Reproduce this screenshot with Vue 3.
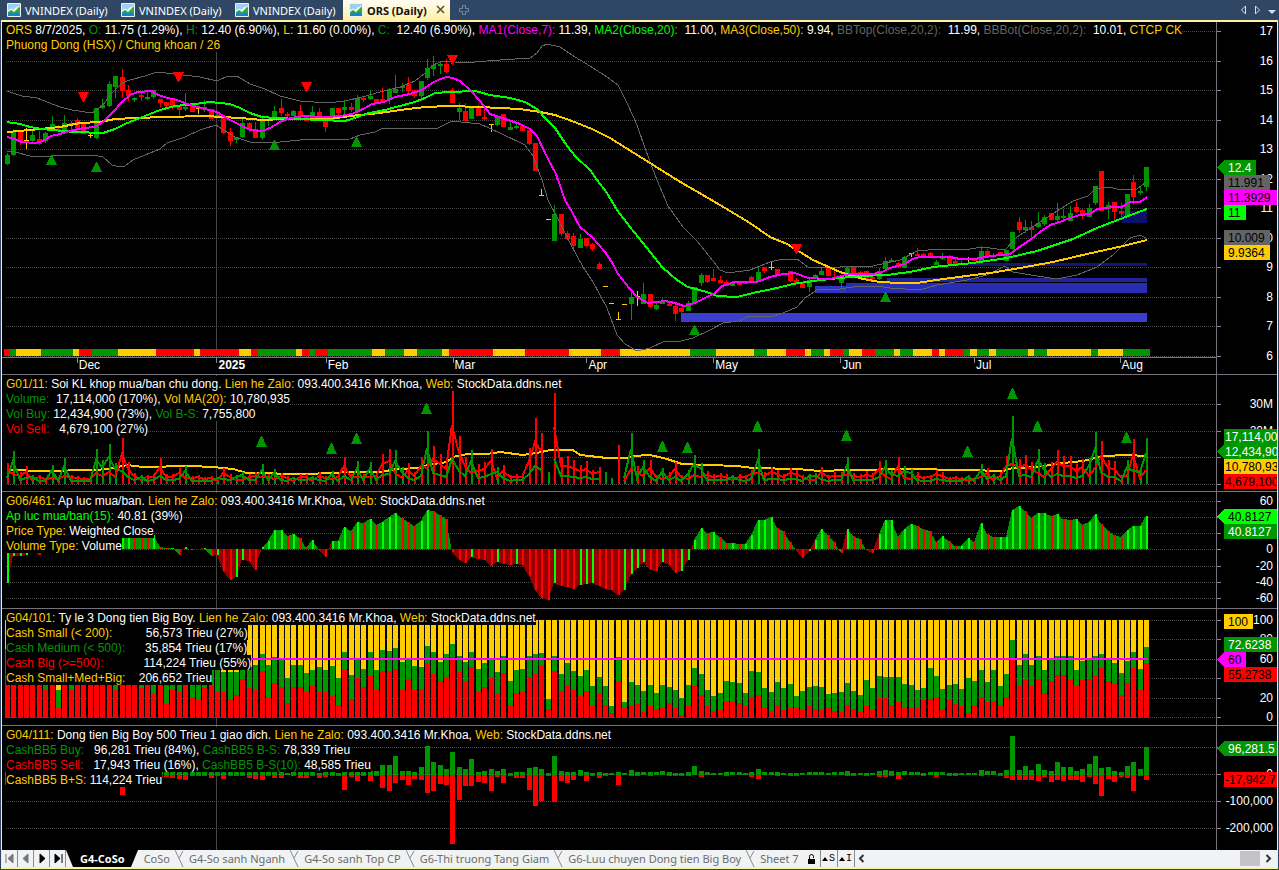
<script setup>
const BAR_STEP = 6.363;
const barX = (i) => Math.round(7 + i * BAR_STEP);

const colors = {
  g: '#009600',
  r: '#ff0000',
  y: '#ffcc00',
  m: '#ff00ff',
  l: '#00ff00',
  d: '#646464',
  w: '#ffffff',
};

const parse = (text) => text.trim().split(/[,\n]+/).map((row) => row.trim().split(/\s+/));

// color, high, body top, body bottom, low
const candles = parse(`
g 153 155 164 165,g 130 131 155 156,r 131 132 141 145,y 128 140 141 149,g 130 135 141 143,r 131 139 144 145
g 132 133 141 143,g 116 124 128 131,r 125 129 131 131,g 115 123 131 133,g 121 123 124 130,r 118 120 128 130
r 124 124 134 134,y 132 135 136 138,g 108 108 138 139,g 99 105 108 109,g 81 84 106 107,g 76 76 87 98
r 69 77 91 98,r 85 90 96 101,g 97 98 100 102,r 93 95 97 101,g 90 97 99 100,g 90 90 97 99
r 99 99 103 107,r 102 102 106 107,r 99 99 108 109,r 105 105 110 118,g 93 107 109 111,r 105 105 112 112
y 106 108 109 114,g 100 107 108 112,r 109 109 119 119,g 113 115 118 118,r 117 117 133 134,r 128 132 141 146
g 137 137 140 143,g 119 123 137 138,r 122 123 130 132,r 122 129 138 138,g 118 120 138 140,g 118 119 121 126
g 106 111 118 119,r 99 108 113 116,r 112 114 116 117,g 110 111 116 116,r 105 111 116 117,r 115 115 121 121
g 106 112 119 120,r 108 112 121 121,r 119 120 127 132,g 108 108 120 121,r 108 108 113 115,g 100 107 110 114
r 103 107 110 112,g 95 98 112 113,r 97 98 100 102,g 90 96 99 100,r 99 99 103 104,r 88 99 102 103
g 88 89 100 104,g 75 89 93 93,g 83 86 88 92,r 77 84 91 95,r 90 90 96 98,g 81 81 96 101
g 59 68 78 80,g 56 65 69 76,g 63 64 66 74,r 59 64 72 73,r 88 90 103 103,g 103 108 112 120
r 103 111 121 121,g 107 108 119 119,r 105 107 116 116,r 109 117 119 120,y 124 124 125 132,g 116 117 125 126
r 114 114 127 127,g 122 127 130 130,g 122 126 128 129,r 124 126 131 131,r 128 130 144 145,r 143 143 171 171
y 189 195 196 196,y 219 219 220 220,g 205 214 241 241,r 214 214 234 236,r 231 233 239 240,r 233 236 246 251
g 234 239 248 248,r 238 238 246 247,r 243 244 249 251,r 262 264 269 269,y 286 286 287 287,y 303 303 304 304
y 312 319 320 320,y 304 304 305 305,g 290 297 304 320,y 291 296 297 306,g 283 294 304 304,r 294 294 307 308
g 303 305 309 310,g 298 301 304 304,r 301 304 306 306,r 302 306 314 321,r 308 308 312 313,g 301 303 311 311
g 287 287 303 303,g 273 275 283 286,r 275 275 282 283,r 269 278 281 281,r 276 280 283 283,r 280 282 286 286
g 281 283 286 286,r 282 282 285 285,r 282 282 284 284,r 276 277 282 282,g 268 272 282 282,r 267 267 271 273
y 261 267 268 270,r 269 269 276 276,r 273 273 275 275,r 271 271 281 282,r 278 280 284 284,r 282 283 288 288
g 279 280 287 292,g 274 275 278 278,g 268 271 275 275,r 268 268 276 276,r 268 277 279 279,g 276 278 283 289
g 266 268 275 275,r 266 266 273 273,r 271 272 274 275,r 271 271 280 280,r 275 277 279 280,g 268 271 279 280
g 257 261 269 269,g 258 260 262 262,r 262 263 267 267,g 256 257 268 268,y 253 253 254 257,r 248 254 256 256
r 253 254 256 256,r 252 253 257 257,g 260 262 265 265,g 253 257 259 260,r 255 257 264 264,r 259 261 264 264
r 260 263 265 265,y 257 259 260 262,r 258 258 261 261,g 246 251 262 262,r 249 251 256 256,g 253 255 256 256
r 252 252 255 256,g 250 250 261 261,g 232 232 249 249,r 217 222 230 233,g 220 227 230 233,r 221 227 230 238
g 212 223 227 228,g 215 217 224 226,r 213 213 220 220,g 203 216 220 222,g 209 216 218 220,g 206 213 221 221
r 202 207 212 213,r 209 210 215 219,g 204 208 217 217,g 186 186 203 205,r 171 171 211 211,g 202 205 209 219
r 202 202 212 222,r 203 211 214 220,g 194 194 217 217,r 175 182 197 205,g 186 191 193 195,g 167 167 187 191
`).map(([color, ...rest], i) => {
  const [high, top, bottom, low] = rest.map(Number);
  return { x: barX(i), fill: colors[color], high, top, bottom, low };
});

const overlays = [
  {
    color: '#646464',
    width: 1,
    points: '7,91 22,96 37,98 60,107 72,110 92,113 102,106 112,93 122,83 130,80 145,76 157,72 175,74 200,77 217,81 228,76 237,76 250,84 265,89 280,96 300,101 328,103 345,101 362,97 380,92 400,87 415,81 425,73 433,65 443,61 455,62 475,62 500,60 530,58 537,53 542,46 547,44 560,47 575,57 590,66 607,77 618,85 628,105 637,125 645,148 652,167 657,180 668,206 683,227 697,241 713,261 720,270 728,273 750,270 770,262 783,259 797,259 808,267 820,268 840,267 873,266 900,260 917,251 940,249 970,249 982,247 1005,250 1017,237 1037,224 1057,211 1073,201 1088,196 1095,189 1108,187 1122,190 1137,189 1146,182',
  },
  {
    color: '#646464',
    width: 1,
    points: '7,151 15,152 30,156 42,157 60,155 93,155 103,157 112,165 120,167 125,166 133,160 150,153 160,149 167,143 185,137 200,130 216,125 225,131 235,137 250,142 270,143 300,140 350,139 360,135 375,132 383,128 410,128 438,128 452,121 480,124 500,133 525,145 533,156 542,180 548,200 560,223 570,243 583,267 593,282 607,308 617,335 625,344 637,351 650,348 665,341 677,342 693,338 710,330 723,323 740,321 748,316 770,317 783,313 797,307 805,298 817,290 840,289 853,287 877,286 890,288 920,290 937,285 967,280 987,275 1005,266 1013,272 1037,276 1057,279 1077,275 1097,267 1113,255 1130,238 1140,235 1146,238',
  },
  {
    color: '#ffcc00',
    width: 2,
    points: '7,132 30,130 60,127 80,123 100,122 115,119 135,118 165,117 205,116 240,118 262,120 285,119 330,119 350,116 380,113 400,110 425,107 450,106 480,107 520,109 540,112 555,115 572,121 592,129 610,138 650,163 677,180 720,205 750,223 770,237 787,244 813,260 840,272 863,279 880,282 900,283 917,283 943,279 990,273 1020,268 1053,262 1087,254 1123,246 1147,240',
  },
  {
    color: '#00ff00',
    width: 2,
    points: '7,122 20,124 30,127 42,129 52,130 75,132 103,133 115,129 125,124 135,120 150,114 160,110 175,106 195,104 210,102 230,104 240,108 250,113 262,117 275,118 300,119 320,120 345,121 355,118 365,114 385,110 400,106 415,102 427,97 435,93 450,92 475,91 490,95 510,98 525,102 537,109 545,118 555,128 565,143 575,156 590,170 597,180 607,193 617,210 630,227 647,248 662,267 677,280 688,287 707,292 717,296 737,297 753,293 777,288 793,284 813,281 840,278 860,276 887,275 910,272 933,267 973,263 1007,258 1037,251 1073,239 1097,228 1123,218 1147,209',
  },
  {
    color: '#ff00ff',
    width: 2,
    points: '7,137 14,139 22,142 35,143 43,141 51,136 60,134 70,131 83,128 95,127 103,122 112,113 122,102 130,95 138,92 152,91 158,95 168,98 177,100 190,105 205,109 217,112 230,120 240,125 250,130 262,131 270,128 280,122 290,118 305,116 325,117 340,116 352,114 365,108 372,104 384,102 395,97 410,94 422,90 432,83 440,79 447,77 453,78 460,81 470,90 480,101 490,114 505,119 520,124 530,129 537,136 548,159 556,174 565,200 572,212 580,227 592,237 605,252 613,264 618,274 630,289 637,297 648,303 665,301 675,303 684,306 695,303 705,298 715,293 722,286 735,282 757,282 770,277 783,274 795,273 808,278 830,279 842,276 850,274 870,274 880,273 890,268 905,264 912,259 920,257 950,257 960,259 975,259 985,257 1000,255 1010,254 1018,248 1030,240 1040,232 1050,225 1060,222 1070,218 1080,215 1090,214 1097,209 1115,207 1122,207 1130,202 1140,202 1147,197',
  },
];

const bands = [
  { x: 681, y: 313, width: 466, height: 9, fill: '#3c3fce' },
  { x: 815, y: 286, width: 31, height: 7, fill: '#3034c0' },
  { x: 846, y: 283, width: 301, height: 10, fill: '#2a2db4' },
  { x: 887, y: 278, width: 260, height: 4, fill: '#22259a' },
  { x: 968, y: 263, width: 179, height: 3, fill: '#14167a' },
  { x: 1122, y: 211, width: 25, height: 12, fill: '#0c1068' },
];

const sells = [[83, 92], [178, 72], [306, 82], [452, 55], [796, 244]];
const buys = [[51, 155], [96, 162], [274, 140], [356, 137], [694, 325], [885, 292]];
const volumeBuys = [
  [261, 436], [331, 443], [356, 433], [426, 403], [662, 441], [687, 442],
  [757, 421], [846, 430], [967, 446], [1012, 388], [1037, 421], [1126, 432],
];

// trend ribbon: color and right edge of each run
const ribbon = parse(`
r 10,g 16,y 41,g 73,y 79,r 92,g 118,y 156,r 194,y 200,r 239,y 251,r 258,g 296,y 302,r 309,g 315,r 328
g 372,y 385,g 404,y 417,g 442,y 449,r 493,y 525,r 569,y 601,r 620,y 690,g 716,y 754,g 767,y 786,r 805
y 811,g 824,y 830,r 843,g 849,y 862,r 875,g 894,y 900,g 913,y 932,r 939,y 945,r 964,g 970,y 977,g 989
y 996,g 1028,y 1034,g 1047,y 1091,g 1098,y 1123,g 1150
`).map(([color, end], i, all) => {
  const x = i ? Number(all[i - 1][1]) : 4;
  return { x, width: Number(end) - x, fill: colors[color] };
});

const volume = parse(`
r 21,g 33,r 12,r 18,g 9,r 9,r 6,g 19,r 6,g 26,r 9,r 8,r 7,r 7,g 35,g 24,g 40,g 21,r 46,r 22
r 11,g 9,r 9,r 10,r 26,r 10,r 10,r 16,g 18,r 8,r 9,r 7,r 8,g 7,r 16,r 10,g 9,g 12,r 10,r 12
g 20,r 10,g 15,r 11,r 8,g 7,r 10,r 10,g 8,r 12,r 8,g 13,r 9,r 27,r 10,g 23,r 10,g 22,r 11,r 30
r 35,g 34,g 17,r 21,r 12,r 27,g 53,r 38,r 30,r 23,r 93,r 48,r 27,g 34,r 20,r 22,r 35,g 17,r 19,r 9
r 10,r 10,r 36,r 66,r 51,g 12,r 91,r 27,r 28,r 24,r 19,r 23,r 14,r 17,g 12,g 6,r 39,g 7,g 51,r 18
g 24,r 24,r 9,g 16,r 12,r 22,r 9,g 14,g 29,g 21,r 13,r 10,r 11,r 10,g 9,r 10,r 9,r 14,g 35,r 12
r 17,r 14,r 10,r 16,r 14,r 9,g 10,g 11,r 17,r 9,r 12,r 12,g 27,r 11,r 10,r 13,r 11,r 23,g 24,g 14
r 27,g 18,g 15,r 12,r 8,r 9,r 14,r 12,r 7,r 8,r 7,g 9,r 7,g 20,r 16,g 10,r 12,r 28,g 68,r 25
r 29,r 22,g 35,g 21,r 22,r 34,r 28,r 28,r 20,r 25,g 26,g 52,r 43,r 24,r 23,r 9,g 24,r 45,g 17,g 46
`).map(([color, height], i) => {
  const h = Number(height);
  const up = color === 'g';
  return {
    x: barX(i),
    h,
    fill: colors[color],
    buy: Math.round(h * (up ? 0.66 : 0.26) + 1),
    sell: Math.round(h * (up ? 0.28 : 0.62) + 1),
  };
});
const volumeLine = (key, from, to) => volume
  .slice(from, to)
  .map((bar) => `${bar.x},${484 - bar[key]}`)
  .join(' ');
const volumeRuns = [[0, 85], [86, 94], [97, 180]];
const volumeAverage = '7,469 13,470 40,471 97,470 113,468 127,465 143,467 190,466 213,467 233,469 247,473 307,474 353,472 380,472 397,469 420,468 427,465 447,462 453,457 467,454 487,454 500,452 523,455 537,453 550,450 573,450 580,455 607,458 627,458 633,456 650,455 667,459 682,464 737,466 753,468 797,469 820,471 849,470 907,469 967,470 1003,471 1013,468 1037,467 1063,463 1083,461 1103,456 1127,455 1146,456';

const pressure = [
  -34, -7, -7, -6, -2, -6, -2, 1, 1, 1, 2, 2, 3, 4, 6, 8, 10, 12, 14, 16,
  15, 14, 13, 14, 2, 1, 1, -6, 2, -1, 0, 1, -7, -6, -22, -31, -28, -11, -12, -21,
  2, 8, 19, 19, 13, 15, 11, 1, 9, -1, -8, 8, 8, 22, 18, 27, 26, 30, 24, 27,
  32, 36, 31, 27, 23, 28, 39, 38, 34, 30, -3, -11, -14, -8, -10, -11, -17, -13, -15, -16,
  -15, -16, -27, -41, -49, -51, -34, -37, -38, -40, -36, -35, -34, -37, -40, -41, -46, -41, -25, -19,
  -13, -21, -22, -13, -16, -24, -22, -11, 9, 21, 16, 17, 12, 6, 6, 5, 5, 14, 29, 29,
  32, 21, 18, 7, -1, -9, -2, 9, 20, 14, 7, -4, 20, 13, 10, -1, -4, 15, 29, 29,
  12, 20, 25, 23, 20, 18, 7, 13, 8, 3, 3, 11, 7, 26, 15, 12, 12, 12, 39, 43,
  38, 31, 36, 36, 33, 35, 30, 29, 30, 24, 27, 35, 25, 18, 14, 12, 19, 23, 23, 33,
];
const pressureSticks = pressure.map((value, i) => ({
  x: barX(i),
  y: Math.min(549, 549 - value),
  height: Math.abs(value),
  fill: i === 0 || value >= pressure[i - 1] ? '#00ff00' : '#ff0000',
}));
const pressureAreas = pressure.slice(1).map((value, i) => ({
  points: `${barX(i)},549 ${barX(i)},${549 - pressure[i]} ${barX(i + 1)},${549 - value} ${barX(i + 1)},549`,
  fill: pressure[i] > 0 ? '#009600' : '#960000',
}));

// medium and big share levels, 390 is 100% and 683 is 0%
const shares = parse(`
475 548,500 560,500 560,500 560,500 570,510 570,520 598,500 575,598 652,500 575,510 598,500 570,500 570
500 570,500 570,500 570,500 570,510 600,500 570,500 570,500 570,520 592,500 575,530 612,520 575,540 640
510 598,520 606,500 575,530 624,530 630,510 592,520 587,540 606,546 606,546 630,546 615,516 567,530 594
525 600,492 543,525 622,501 579,510 591,564 639,525 591,525 591,549 606,538 588,531 606,538 606,528 616
564 645,484 540,555 627,510 562,535 591,486 556,540 598,480 543,483 543,474 537,516 598,510 567,528 600
531 597,468 519,484 552,514 573,492 564,460 501,498 546,514 573,484 531,537 606,519 591,510 564,546 612
498 549,573 645,540 609,537 606,498 561,492 550,489 528,627 657,498 543,552 603,519 585,543 600,558 618
540 603,588 648,561 609,588 645,648 669,501 576,636 654,575 645,585 642,603 666,583 648,609 657,583 652
591 639,598 654,624 675,585 648,534 587,552 615,598 648,618 663,609 660,573 633,576 636,579 639,609 648
543 621,546 615,594 652,606 663,576 645,594 660,582 652,618 652,603 660,591 648,588 657,591 660,612 652
609 663,606 666,579 645,603 657,615 666,570 648,594 660,558 624,561 624,561 645,561 636,582 652,585 652
600 654,594 630,534 627,558 624,597 657,585 630,582 642,597 648,564 669,573 645,540 621,576 636,540 633
588 645,552 621,450 507,525 587,492 570,525 587,498 567,540 609,510 573,498 555,498 555,498 570,540 587
513 570,510 567,498 558,492 534,507 573,519 582,549 615,513 579,486 534,537 600,471 519
`).map(([medium, big], i) => ({
  x: barX(i) - 2,
  medium: Math.round((683 - medium) / 3),
  big: Math.round((683 - big) / 3),
}));

// big money bought and sold per session
const flows = parse(`
2 10,2 2,2 2,2 2,2 2,2 2,2 2,2 2,2 2,2 2,2 2,2 2,2 2,2 2,2 2,2 2,2 2,2 2,2 20,2 2
2 2,2 2,2 2,2 2,2 2,2 2,2 3,3 4,3 5,2 1,2 1,2 1,2 3,2 1,3 4,2 1,3 1,3 1,2 3,2 4
2 5,3 1,3 3,3 3,1 0,2 1,3 3,2 3,3 1,1 3,2 2,3 1,1 1,3 15,2 2,3 6,3 1,3 6,3 1,9 13
9 16,18 8,3 5,3 10,2 4,7 5,28 18,12 16,9 9,5 10,22 69,7 25,5 11,15 11,2 7,3 8,5 16,3 2,5 8,1 1
2 3,2 3,6 15,7 31,5 26,1 1,18 27,3 6,2 8,2 5,4 1,2 6,1 1,2 3,1 1,1 0,2 10,1 0,4 1,2 1
2 0,2 1,2 0,3 0,2 1,1 1,1 1,2 1,8 0,3 2,2 0,1 0,1 0,2 1,2 0,2 0,1 0,2 2,5 4,2 0
2 0,2 1,1 0,1 1,1 1,1 0,2 0,2 0,2 0,1 0,2 0,2 0,3 1,1 1,1 0,1 1,1 0,3 2,4 2,3 1
2 4,3 0,2 0,2 0,1 1,2 0,2 2,2 0,1 1,1 1,1 0,1 0,1 0,4 1,3 0,3 0,1 1,4 3,38 5,4 5
8 5,4 5,10 6,4 2,3 7,12 5,7 6,7 5,3 5,5 7,10 2,18 9,6 21,7 4,3 7,2 2,8 3,12 16,5 1,27 5
`).map(([buy, sell], i) => ({ x: barX(i) - 2, buy: Number(buy), sell: Number(sell) }));

const contact = [
  ['y', 'Lien he Zalo:'], ['w', ' 093.400.3416 Mr.Khoa, '], ['y', 'Web:'], ['w', ' StockData.ddns.net'],
];

const panels = [
  {
    id: 'price',
    top: 22,
    height: 335,
    grid: [31, 61, 90, 120, 149, 179, 208, 238, 267, 297, 326, 356],
    lines: [
      [
        ['y', 'ORS'], ['w', ' 8/7/2025, '], ['g', 'O:'], ['w', ' 11.75 (1.29%), '], ['g', 'H:'], ['w', ' 12.40 (6.90%), '],
        ['y', 'L:'], ['w', ' 11.60 (0.00%), '], ['g', 'C:'], ['w', '  12.40 (6.90%), '], ['m', 'MA1(Close,7):'], ['w', ' 11.39, '],
        ['l', 'MA2(Close,20):'], ['w', '  11.00, '], ['y', 'MA3(Close,50):'], ['w', ' 9.94, '], ['d', 'BBTop(Close,20,2):'], ['w', '  11.99, '],
        ['d', 'BBBot(Close,20,2):'], ['w', '  10.01, '], ['y', 'CTCP CK'],
      ],
      [['y', 'Phuong Dong (HSX) / Chung khoan / 26']],
    ],
    labels: [[31, '17'], [61, '16'], [90, '15'], [120, '14'], [149, '13'], [179, '12'], [208, '11'], [238, '10'], [267, '9'], [297, '8'], [326, '7'], [356, '6']],
    tags: [
      { y: 160, text: '12.4', fill: '#009600', color: '#ffffff', width: 32, arrow: true },
      { y: 175, text: '11.991', fill: '#646464', width: 46 },
      { y: 190, text: '11.3929', fill: '#ff00ff', width: 53 },
      { y: 205, text: '11', fill: '#00ff00', width: 22 },
      { y: 230, text: '10.009', fill: '#646464', width: 46 },
      { y: 245, text: '9.9364', fill: '#ffcc00', width: 46 },
    ],
  },
  {
    id: 'volume',
    top: 375,
    height: 116,
    grid: [404, 431, 457, 484],
    lines: [
      [['y', 'G01/11:'], ['w', ' Soi KL khop mua/ban chu dong. '], ...contact],
      [['g', 'Volume:'], ['w', '  17,114,000 (170%), '], ['y', 'Vol MA(20):'], ['w', ' 10,780,935']],
      [['g', 'Vol Buy:'], ['w', ' 12,434,900 (73%), '], ['g', 'Vol B-S:'], ['w', ' 7,755,800']],
      [['r', 'Vol Sell:'], ['w', '   4,679,100 (27%)']],
    ],
    labels: [[404, '30M'], [431, '20M']],
    tags: [
      { y: 429, text: '17,114,000', fill: '#009600', color: '#ffffff', width: 53 },
      { y: 444, text: '12,434,900', fill: '#009600', color: '#ffffff', width: 53, arrow: true },
      { y: 459, text: '10,780,935', fill: '#ffcc00', width: 53 },
      { y: 474, text: '4,679,100', fill: '#ff0000', width: 53 },
    ],
  },
  {
    id: 'pressure',
    top: 492,
    height: 116,
    grid: [501, 517, 533, 549, 566, 582, 598],
    lines: [
      [['y', 'G06/461:'], ['w', ' Ap luc mua/ban. '], ...contact],
      [['l', 'Ap luc mua/ban(15):'], ['w', ' 40.81 (39%)']],
      [['y', 'Price Type:'], ['w', ' Weighted Close']],
      [['y', 'Volume Type:'], ['w', ' Volume']],
    ],
    labels: [[501, '60'], [549, '0'], [566, '-20'], [582, '-40'], [598, '-60']],
    tags: [
      { y: 509, text: '40.8127', fill: '#00ff00', width: 53, arrow: true },
      { y: 524, text: '40.8127', fill: '#009600', color: '#ffffff', width: 53 },
    ],
  },
  {
    id: 'share',
    top: 609,
    height: 116,
    grid: [620, 639, 659, 678, 698, 717],
    lines: [
      [['y', 'G04/101:'], ['w', ' Ty le 3 Dong tien Big Boy. '], ...contact],
      [['y', 'Cash Small (< 200):'], ['w', '          56,573 Trieu (27%)']],
      [['g', 'Cash Medium (< 500):'], ['w', '      35,854 Trieu (17%)']],
      [['r', 'Cash Big (>=500):'], ['w', '            114,224 Trieu (55%)']],
      [['y', 'Cash Small+Med+Big:'], ['w', '    206,652 Trieu']],
    ],
    labels: [[620, '100'], [639, '80'], [659, '60'], [698, '20'], [717, '0']],
    tags: [
      { y: 614, text: '100', fill: '#ffcc00', width: 29 },
      { y: 637, text: '72.6238', fill: '#009600', color: '#ffffff', width: 53 },
      { y: 652, text: '60', fill: '#ff00ff', width: 22, arrow: true },
      { y: 667, text: '55.2738', fill: '#ff0000', width: 53 },
    ],
  },
  {
    id: 'flow',
    top: 726,
    height: 124,
    grid: [747, 774, 801, 828],
    lines: [
      [['y', 'G04/111:'], ['w', ' Dong tien Big Boy 500 Trieu 1 giao dich. '], ...contact],
      [['g', 'CashBB5 Buy:'], ['w', '   96,281 Trieu (84%), '], ['g', 'CashBB5 B-S:'], ['w', ' 78,339 Trieu']],
      [['r', 'CashBB5 Sell:'], ['w', '   17,943 Trieu (16%), '], ['g', 'CashBB5 B-S(10):'], ['w', ' 48,585 Trieu']],
      [['y', 'CashBB5 B+S:'], ['w', ' 114,224 Trieu']],
    ],
    labels: [[774, '0'], [801, '-100,000'], [828, '-200,000']],
    tags: [
      { y: 741, text: '96,281.5', fill: '#009600', color: '#ffffff', width: 53, arrow: true },
      { y: 772, text: '-17,942.7', fill: '#ff0000', width: 53 },
    ],
  },
];

const months = [
  { name: '', span: 74 },
  { name: 'Dec', span: 140 },
  { name: '2025', span: 109, strong: true },
  { name: 'Feb', span: 127 },
  { name: 'Mar', span: 134 },
  { name: 'Apr', span: 127 },
  { name: 'May', span: 127 },
  { name: 'Jun', span: 134 },
  { name: 'Jul', span: 146 },
  { name: 'Aug', span: 96 },
];

const documents = [
  { id: 1, name: 'VNINDEX (Daily)' },
  { id: 2, name: 'VNINDEX (Daily)' },
  { id: 3, name: 'VNINDEX (Daily)' },
  { id: 4, name: 'ORS (Daily)', active: true },
];

const sheets = [
  'G4-CoSo', 'CoSo', 'G4-So sanh Nganh', 'G4-So sanh Top CP',
  'G6-Thi truong Tang Giam', 'G6-Luu chuyen Dong tien Big Boy', 'Sheet 7',
];

const sheetNav = [
  { label: 'First sheet', path: 'M4 3v9M11 3v9L6 7.5z' },
  { label: 'Previous sheet', path: 'M10 3v9L5 7.5z' },
  { label: 'Next sheet', path: 'M6 3v9l5-4.5z', dark: true },
  { label: 'Last sheet', path: 'M5 3v9l5-4.5zM12 3v9', dark: true },
];
</script>

<template>
  <div class="workspace">
    <nav class="documents">
      <button
        v-for="doc in documents"
        :key="doc.id"
        type="button"
        class="documents__tab"
        :class="{ 'documents__tab--active': doc.active }"
      >
        <svg width="14" height="14" viewBox="0 0 14 14" aria-hidden="true">
          <rect width="14" height="14" rx="1" fill="#e8f4fb" />
          <path d="M1 1h12v5L9 4 5 8 1 7z" fill="#9fd0f2" />
          <path d="M1 9l3-2 3 2 5-5 1 1v8H1z" fill="#2fae36" />
          <path d="M1 11l3-2 3 2 3-2 3 2v2H1z" fill="#1c7fd0" />
          <path d="M1 8l3-2 3 2 5-5" fill="none" stroke="#ffffff" />
        </svg>
        <span>{{ doc.name }}</span>
        <svg v-if="doc.active" class="documents__close" width="10" height="10" viewBox="0 0 10 10" aria-hidden="true">
          <path d="M1 1l7 7M8 1L1 8" stroke="#5b5137" stroke-width="1.6" />
        </svg>
      </button>
      <button type="button" class="documents__add" aria-label="New tab">
        <svg width="12" height="12" viewBox="0 0 12 12">
          <path d="M4.500 1.500h3v3h3v3h-3v3h-3v-3h-3v-3h3z" fill="none" stroke="#7688a0" />
        </svg>
      </button>
      <div class="documents__scroll">
        <button type="button" aria-label="Scroll left">
          <svg width="8" height="10" viewBox="0 0 8 10"><path d="M5.500 1v8L1.500 5z" fill="none" stroke="#d4dde8" /></svg>
        </button>
        <button type="button" aria-label="Scroll right">
          <svg width="8" height="10" viewBox="0 0 8 10"><path d="M1.500 1v8l4-4z" fill="none" stroke="#d4dde8" /></svg>
        </button>
        <button type="button" aria-label="Tab list">
          <svg width="8" height="10" viewBox="0 0 8 10"><path d="M0 5h8L4 9z" fill="#d4dde8" /></svg>
        </button>
      </div>
    </nav>

    <main class="frame">
      <section v-for="panel in panels" :key="panel.id" class="panel" :class="`panel--${panel.id}`">
        <div class="panel__main">
          <div class="panel__plot">
            <svg
              class="panel__chart"
              :viewBox="`2 ${panel.top} 1214 ${panel.height}`"
              preserveAspectRatio="none"
              shape-rendering="crispEdges"
            >
              <line
                v-for="y in panel.grid"
                :key="y"
                x1="6"
                x2="1216"
                :y1="y + 0.5"
                :y2="y + 0.5"
                stroke="#464646"
                stroke-dasharray="1 1"
              />
              <line x1="216.500" x2="216.500" :y1="panel.top" :y2="panel.top + panel.height" stroke="#464646" />

              <template v-if="panel.id === 'price'">
                <rect v-for="band in bands" :key="band.y" v-bind="band" />
                <rect v-for="run in ribbon" :key="run.x" v-bind="run" y="349" height="7" />
                <g v-for="candle in candles" :key="candle.x" :fill="candle.fill">
                  <rect :x="candle.x" :y="candle.high" width="1" :height="candle.low - candle.high" />
                  <rect :x="candle.x - 2" :y="candle.top" width="5" :height="candle.bottom - candle.top" />
                </g>
                <polyline
                  v-for="line in overlays"
                  :key="line.points"
                  :points="line.points"
                  :stroke="line.color"
                  :stroke-width="line.width"
                  fill="none"
                />
                <path v-for="[x, y] in sells" :key="x" :d="`M${x - 5} ${y}h11l-5 10h-1z`" fill="#ff0000" />
                <path v-for="[x, y] in buys" :key="x" :d="`M${x - 5} ${y + 10}h11l-5 -10h-1z`" fill="#009600" />
              </template>

              <template v-if="panel.id === 'volume'">
                <polyline :points="volumeAverage" fill="none" stroke="#ffcc00" stroke-width="2" />
                <rect
                  v-for="bar in volume"
                  :key="bar.x"
                  :x="bar.x"
                  :y="484 - bar.h"
                  width="2"
                  :height="bar.h"
                  :fill="bar.fill"
                />
                <g v-for="[from, to] in volumeRuns" :key="from" fill="none" stroke-width="2">
                  <polyline :points="volumeLine('sell', from, to)" stroke="#ff0000" />
                  <polyline :points="volumeLine('buy', from, to)" stroke="#009600" />
                </g>
                <path v-for="[x, y] in volumeBuys" :key="x" :d="`M${x - 5} ${y + 11}h11l-5 -11h-1z`" fill="#009600" />
              </template>

              <template v-if="panel.id === 'pressure'">
                <polygon v-for="area in pressureAreas" :key="area.points" v-bind="area" />
                <rect v-for="stick in pressureSticks" :key="stick.x" v-bind="stick" width="2" />
              </template>

              <template v-if="panel.id === 'share'">
                <g v-for="bar in shares" :key="bar.x">
                  <rect :x="bar.x" y="620" width="5" height="98" fill="#ffcc00" />
                  <rect :x="bar.x" :y="718 - bar.medium" width="5" :height="bar.medium" fill="#009600" />
                  <rect :x="bar.x" :y="718 - bar.big" width="5" :height="bar.big" fill="#ff0000" />
                </g>
                <rect x="6" y="658" width="1142" height="2" fill="#ff00ff" />
              </template>

              <template v-if="panel.id === 'flow'">
                <g v-for="bar in flows" :key="bar.x">
                  <rect :x="bar.x" :y="774 - bar.buy" width="5" :height="bar.buy + 1" fill="#009600" />
                  <rect :x="bar.x" y="775" width="5" :height="bar.sell" fill="#ff0000" />
                </g>
              </template>
            </svg>

            <div class="panel__legend">
              <p v-for="(line, n) in panel.lines" :key="n">
                <span v-for="([color, text], k) in line" :key="k" :class="`ink-${color}`">{{ text }}</span>
              </p>
            </div>
          </div>

          <svg class="panel__axis" :viewBox="`1217 ${panel.top} 60 ${panel.height}`" shape-rendering="crispEdges">
            <path v-for="y in panel.grid" :key="y" :d="`M1217 ${y + 0.5}h4`" stroke="#8c8794" />
            <text v-for="[y, text] in panel.labels" :key="text" x="1273" :y="y + 4" text-anchor="end" fill="#ffffff">{{ text }}</text>
            <g v-for="tag in panel.tags" :key="tag.y">
              <path v-if="tag.arrow" :d="`M1217 ${tag.y + 7}l7 -7v15z`" :fill="tag.fill" />
              <rect x="1224" :y="tag.y" :width="tag.width" height="15" :fill="tag.fill" />
              <text :x="tag.text.length > 8 ? 1225 : 1228" :y="tag.y + 12" :fill="tag.color ?? '#000000'">{{ tag.text }}</text>
            </g>
          </svg>
        </div>

        <div v-if="panel.id === 'price'" class="months">
          <div class="months__track">
            <span
              v-for="month in months"
              :key="month.name"
              class="months__item"
              :class="{ 'months__item--strong': month.strong }"
              :style="{ flexGrow: month.span }"
            >{{ month.name }}</span>
          </div>
        </div>
      </section>

      <footer class="sheets">
        <button v-for="item in sheetNav" :key="item.label" type="button" class="sheets__nav" :aria-label="item.label">
          <svg width="15" height="15" viewBox="0 0 15 15">
            <path :d="item.path" :fill="item.dark ? '#000000' : '#777777'" :stroke="item.dark ? '#000000' : '#777777'" />
          </svg>
        </button>
        <template v-for="(sheet, n) in sheets" :key="sheet">
          <svg v-if="n === 0" class="sheets__edge" width="9" height="17" viewBox="0 0 9 17">
            <path d="M0 0h9v17H7z" fill="#000000" />
          </svg>
          <button type="button" class="sheets__tab" :class="{ 'sheets__tab--active': n === 0 }">{{ sheet }}</button>
          <svg v-if="n < sheets.length - 1" class="sheets__edge" width="9" height="17" viewBox="0 0 9 17">
            <path v-if="n === 0" d="M0 0h8L1 17H0z" fill="#000000" />
            <path v-else d="M0 0l8 17M8 1L4 8" fill="none" stroke="#8a8a8a" />
          </svg>
        </template>
        <button type="button" class="sheets__tool" aria-label="Lock">
          <svg width="9" height="10" viewBox="0 0 9 10">
            <path d="M2.500 5V2.500a2 2 0 0 1 4 0V4" fill="none" stroke="#000000" />
            <rect x="1" y="5" width="7" height="5" />
          </svg>
        </button>
        <button type="button" class="sheets__tool"><svg width="6" height="4" viewBox="0 0 6 4"><path d="M0 4h6L3 0z" /></svg>S</button>
        <button type="button" class="sheets__tool"><svg width="6" height="4" viewBox="0 0 6 4"><path d="M0 4h6L3 0z" /></svg>I</button>
        <div class="sheets__scroll">
          <button type="button" aria-label="Scroll left">
            <svg width="7" height="9" viewBox="0 0 7 9"><path d="M5.500 1L2 4.500 5.500 8" fill="none" stroke="#333333" stroke-width="2" /></svg>
          </button>
          <i class="sheets__thumb" />
          <button type="button" aria-label="Scroll right">
            <svg width="7" height="9" viewBox="0 0 7 9"><path d="M1.500 1L5 4.500 1.500 8" fill="none" stroke="#333333" stroke-width="2" /></svg>
          </button>
        </div>
      </footer>
    </main>
  </div>
</template>

<style>
body {
  margin: 0;
  background: #2f4664;
}
</style>

<style scoped>
.workspace {
  padding: 0 1px 1px 1px;
  background: #2f4664;
  font-family: "Liberation Sans", Arial, sans-serif;
  font-size: 12px;
}

button {
  padding: 0;
  border: 0;
  background: none;
  color: inherit;
  font: inherit;
}

.documents {
  display: flex;
  align-items: stretch;
  height: 20px;
  font-family: "Noto Sans", "Open Sans", sans-serif;
  font-size: 11px;
  color: #ffffff;
}

.documents__tab {
  display: flex;
  align-items: center;
  gap: 4px;
  box-sizing: border-box;
  min-width: 114px;
  padding: 0 4px 0 6px;
  white-space: nowrap;
}

.documents__tab--active {
  min-width: 107px;
  background: linear-gradient(#fffdf2, #fff0a8);
  color: #111111;
  font-weight: 700;
}

.documents__close {
  margin-left: auto;
}

.documents__add {
  padding: 0 8px;
}

.documents__scroll {
  display: flex;
  align-items: center;
  gap: 6px;
  margin-left: auto;
  padding-right: 2px;
}

.documents svg,
.sheets svg {
  display: block;
}

.frame {
  border: solid #fff0a8;
  border-width: 2px 1px;
  background: #000000;
}

.panel {
  border-bottom: 1px solid #77727c;
}

.panel--flow {
  border-bottom: 0;
}

.panel__main {
  display: flex;
}

.panel__plot {
  position: relative;
  flex: 1;
  min-width: 0;
}

.panel__chart {
  display: block;
  width: 100%;
  height: 116px;
}

.panel__axis {
  display: block;
  flex: none;
  width: 60px;
  height: 116px;
  border-left: 1px solid #77727c;
}

.panel--price .panel__chart,
.panel--price .panel__axis {
  height: 335px;
}

/* the lowest price label hangs below the scale */
.panel--price .panel__axis {
  overflow: visible;
}

.panel--flow .panel__chart,
.panel--flow .panel__axis {
  height: 124px;
}

.panel__legend {
  position: absolute;
  top: 1px;
  left: 4px;
}

.panel--price .panel__legend {
  top: 0;
}

.panel__legend p {
  width: max-content;
  margin: 0;
  padding-top: 1px;
  background: #000000;
  line-height: 14px;
  white-space: pre;
}

.ink-y {
  color: #ffcc00;
}

.ink-w {
  color: #ffffff;
}

.ink-g {
  color: #009600;
}

.ink-r {
  color: #ff0000;
}

.ink-m {
  color: #ff00ff;
}

.ink-l {
  color: #00ff00;
}

.ink-d {
  color: #646464;
}

.months {
  padding-right: 60px;
}

.months__track {
  display: flex;
  box-sizing: border-box;
  height: 17px;
  border-top: 1px solid #77727c;
  border-right: 1px solid #77727c;
}

.months__item {
  flex: 1 1 0;
  box-sizing: border-box;
  min-width: 0;
  padding-left: 2px;
  background: linear-gradient(#8c8794, #8c8794) left top / 1px 5px no-repeat;
  color: #ffffff;
  line-height: 15px;
}

.months__item:first-child {
  background: none;
}

.months__item--strong {
  font-weight: 700;
}

.sheets {
  display: flex;
  align-items: stretch;
  height: 17px;
  background: #f0f2f4;
  color: #6c6c6c;
  font-family: "Noto Sans", "Open Sans", sans-serif;
  font-size: 11px;
  line-height: 16px;
}

.sheets__nav {
  padding-right: 1px;
  border-right: 1px solid #8c8c8c;
  box-sizing: border-box;
  width: 16px;
}

.sheets__tab {
  padding: 0 5px;
  white-space: nowrap;
}

.sheets__tab--active {
  background: #000000;
  color: #ffffff;
  font-weight: 700;
}

.sheets__edge {
  flex: none;
}

.sheets__tool {
  display: flex;
  align-items: center;
  justify-content: center;
  gap: 1px;
  box-sizing: border-box;
  width: 17px;
  border-right: 1px solid #8c8c8c;
  color: #000000;
  font-family: "Liberation Mono", monospace;
  font-size: 10px;
}

.sheets__tool:first-of-type {
  border-right: 0;
}

.sheets__scroll {
  display: flex;
  flex: 1;
  align-items: center;
  padding: 0 5px 0 3px;
}

.sheets__thumb {
  width: 20px;
  height: 15px;
  margin: 0 5px 0 auto;
  background: #c4c4c8;
}
</style>
